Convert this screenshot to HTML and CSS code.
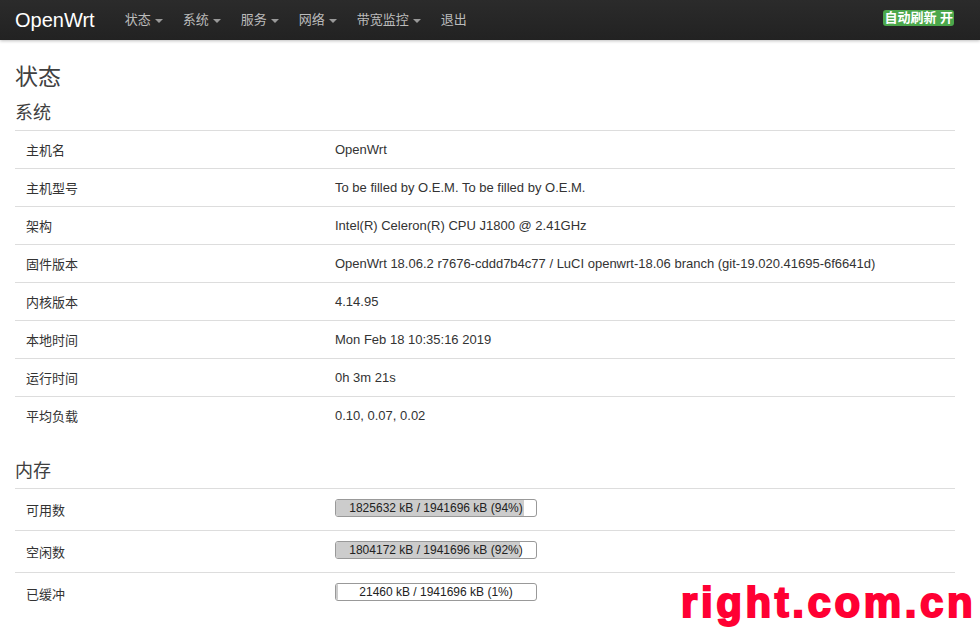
FILE: index.html
```html
<!DOCTYPE html>
<html lang="zh-CN">
<head>
<meta charset="utf-8">
<title>OpenWrt - 状态</title>
<link rel="stylesheet" href="styles.css">
</head>
<body>
<header class="navbar">
  <a class="brand">OpenWrt</a>
  <nav class="menu">
    <span class="item">状态<i class="caret"></i></span>
    <span class="item">系统<i class="caret"></i></span>
    <span class="item">服务<i class="caret"></i></span>
    <span class="item">网络<i class="caret"></i></span>
    <span class="item">带宽监控<i class="caret"></i></span>
    <span class="item">退出</span>
  </nav>
  <span class="badge">自动刷新 开</span>
</header>
<main class="content">
  <h2 class="title">状态</h2>
  <h3 class="section">系统</h3>
  <div class="table">
    <div class="row"><div class="key">主机名</div><div class="val">OpenWrt</div></div>
    <div class="row"><div class="key">主机型号</div><div class="val">To be filled by O.E.M. To be filled by O.E.M.</div></div>
    <div class="row"><div class="key">架构</div><div class="val">Intel(R) Celeron(R) CPU J1800 @ 2.41GHz</div></div>
    <div class="row"><div class="key">固件版本</div><div class="val">OpenWrt 18.06.2 r7676-cddd7b4c77 / LuCI openwrt-18.06 branch (git-19.020.41695-6f6641d)</div></div>
    <div class="row"><div class="key">内核版本</div><div class="val">4.14.95</div></div>
    <div class="row"><div class="key">本地时间</div><div class="val">Mon Feb 18 10:35:16 2019</div></div>
    <div class="row"><div class="key">运行时间</div><div class="val">0h 3m 21s</div></div>
    <div class="row"><div class="key">平均负载</div><div class="val">0.10, 0.07, 0.02</div></div>
  </div>
  <h3 class="section mem">内存</h3>
  <div class="table">
    <div class="row tall"><div class="key">可用数</div><div class="val"><div class="bar"><div class="fill" style="width:94%"></div><span class="bar-text">1825632 kB / 1941696 kB (94%)</span></div></div></div>
    <div class="row tall"><div class="key">空闲数</div><div class="val"><div class="bar"><div class="fill" style="width:92%"></div><span class="bar-text">1804172 kB / 1941696 kB (92%)</span></div></div></div>
    <div class="row tall"><div class="key">已缓冲</div><div class="val"><div class="bar"><div class="fill" style="width:1%"></div><span class="bar-text">21460 kB / 1941696 kB (1%)</span></div></div></div>
  </div>
</main>
<div class="watermark">right.com.cn</div>
</body>
</html>
```

FILE: styles.css
```css
html, body {
  margin: 0;
  padding: 0;
  background: #fff;
}
body {
  font-family: "Liberation Sans", "Noto Sans CJK SC", sans-serif;
  font-size: 13px;
  color: #333;
  width: 980px;
  height: 631px;
  overflow: hidden;
  position: relative;
}
.navbar {
  height: 40px;
  background: linear-gradient(to bottom, #2b2b2b, #222);
  display: flex;
  align-items: center;
  box-shadow: 0 1px 3px rgba(0,0,0,0.25);
}
.brand {
  color: #fff;
  font-size: 20px;
  margin-left: 15px;
  margin-right: 20px;
  line-height: 40px;
}
.menu {
  display: flex;
  align-items: center;
  flex: 1;
}
.item {
  color: #bbb;
  font-family: "Liberation Sans", "Noto Sans CJK SC", sans-serif;
  font-size: 13px;
  padding: 0 10px;
  line-height: 40px;
  display: flex;
  align-items: center;
}
.caret {
  display: inline-block;
  width: 0;
  height: 0;
  border-left: 4px solid transparent;
  border-right: 4px solid transparent;
  border-top: 4px solid #999;
  margin-left: 4px;
  margin-top: 1px;
}
.badge {
  background: #4ba74b;
  color: #fff;
  font-weight: bold;
  font-size: 13px;
  line-height: 16px;
  padding: 0 1px 0 1px;
  border-radius: 3px;
  margin-right: 26px;
  margin-top: -4px;
}
.content {
  width: 940px;
  padding: 0 15px;
}
.title {
  font-family: "Noto Sans CJK SC", sans-serif;
  font-size: 23px;
  font-weight: normal;
  color: #404040;
  line-height: 30px;
  margin: 20px 0 0;
}
.section {
  font-family: "Noto Sans CJK SC", sans-serif;
  font-size: 18px;
  font-weight: normal;
  color: #404040;
  line-height: 24px;
  margin: 9px 0 7px;
}
.section.mem {
  margin-top: 23px;
}
.table {
  display: flex;
  flex-direction: column;
}
.row {
  display: grid;
  grid-template-columns: 310px 1fr;
  height: 37px;
  border-top: 1px solid #ddd;
  align-items: center;
}
.row.tall {
  height: 41px;
}
.key {
  padding-left: 11px;
  color: #333;
  margin-top: -1px;
}
.val {
  padding-left: 10px;
  color: #333;
}
.bar {
  position: relative;
  width: 200px;
  height: 16px;
  border: 1px solid #999;
  border-radius: 3px;
  background: #fff;
  overflow: hidden;
  margin-top: -4px;
}
.fill {
  height: 100%;
  background: #ccc;
}
.bar-text {
  position: absolute;
  left: 0;
  right: 0;
  top: 0;
  text-align: center;
  line-height: 16px;
  font-size: 12px;
  color: #222;
}
.watermark {
  position: absolute;
  left: 681px;
  top: 578px;
  font-family: "Liberation Sans", sans-serif;
  font-weight: bold;
  font-size: 42px;
  letter-spacing: 3.6px;
  color: #ff0033;
  -webkit-text-stroke: 2px #ff0033;
  line-height: 50px;
}
```
